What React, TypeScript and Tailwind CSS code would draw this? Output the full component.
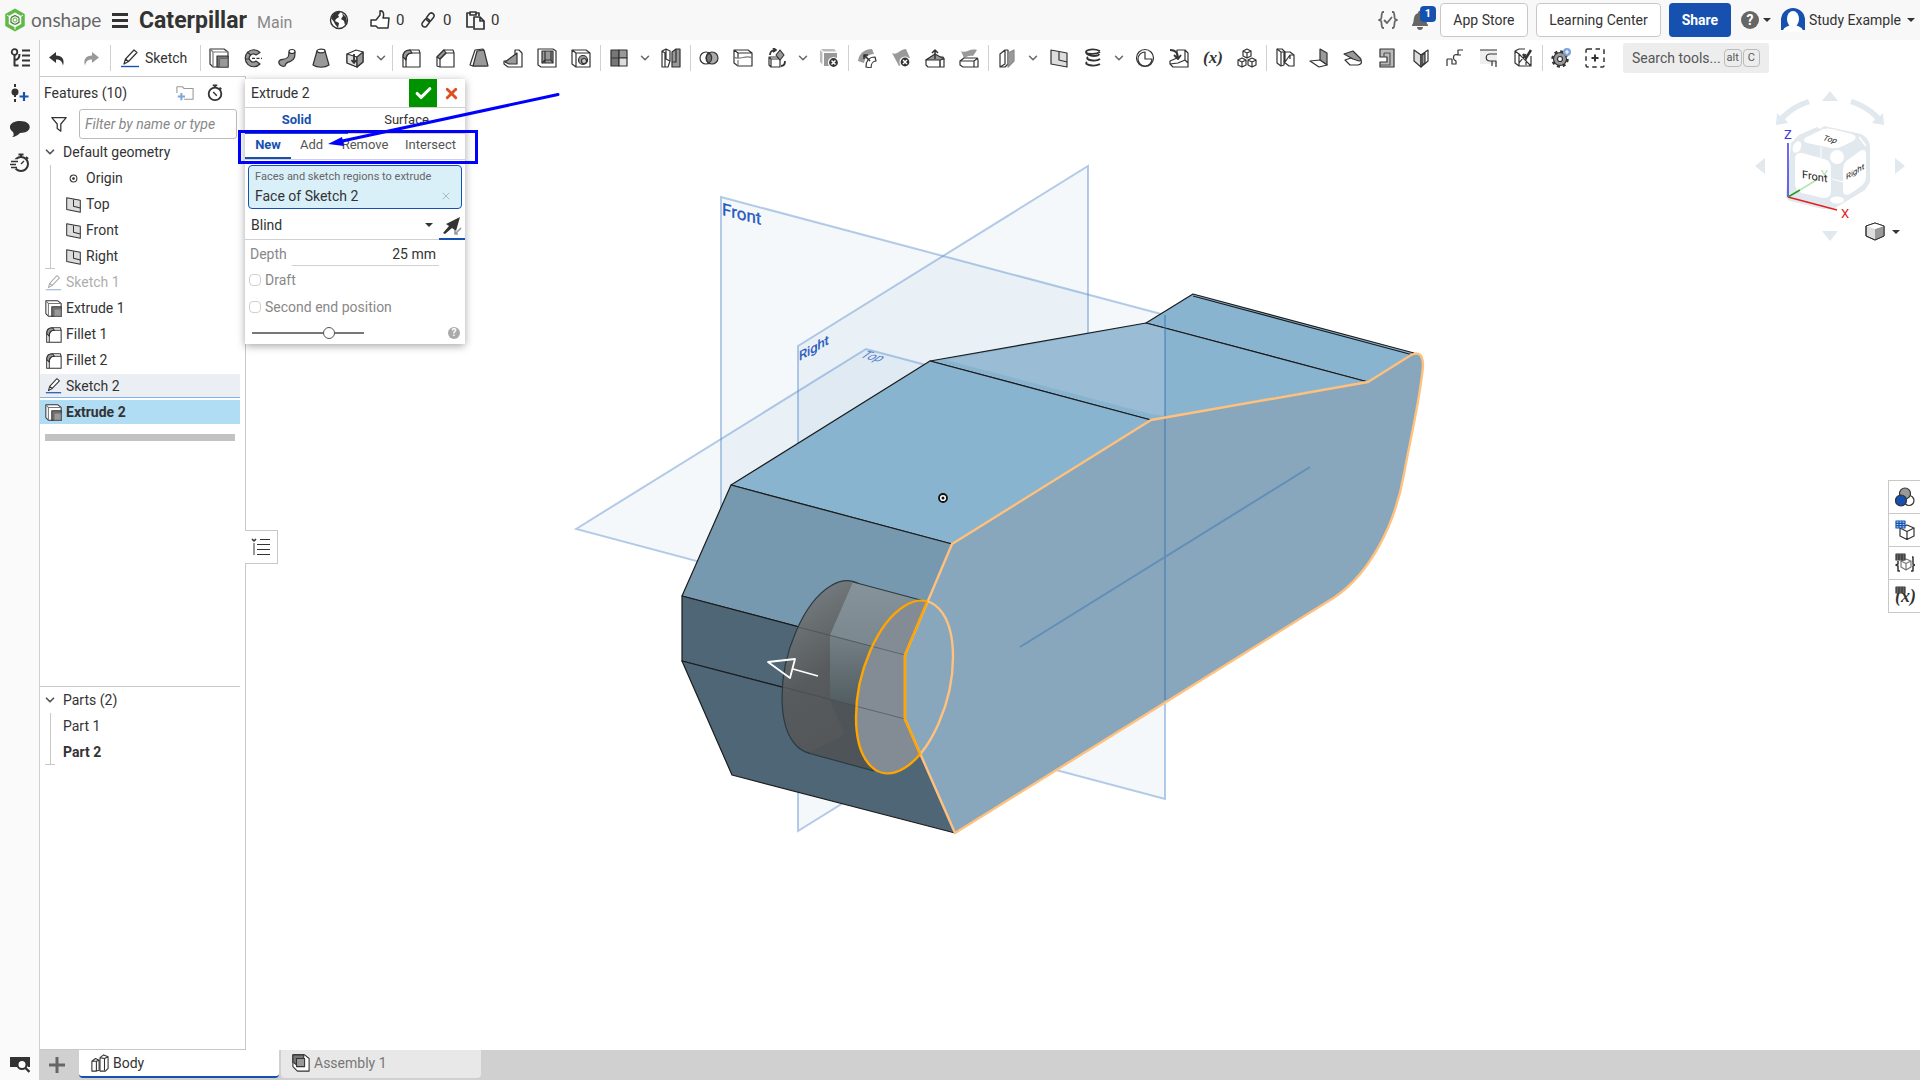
import { useState } from 'react';
import type { ReactNode } from 'react';
import { Check, ChevronDown, X } from 'lucide-react';

const DARK = '#333333';
const MID = '#999999';

interface IconProps {
  size?: string;
  children: ReactNode;
}

// All tool glyphs are drawn on a 20 unit grid
const Icon = ({ size = 'size-5', children }: IconProps) => (
  <svg
    viewBox="0 0 20 20"
    className={`${size} shrink-0`}
    fill="none"
    stroke={DARK}
    strokeWidth="1.2"
    strokeLinejoin="round"
    aria-hidden="true"
  >
    {children}
  </svg>
);

const glyphs: Record<string, ReactNode> = {
  undo: <path d="M9 4 2 9.500l7 5.500v-3.500c4 0 6 1.500 7 6 2-6-1-10-7-10z" fill={DARK} stroke="none" />,
  redo: <path d="m11 4 7 5.500-7 5.500v-3.500c-4 0-6 1.500-7 6-2-6 1-10 7-10z" fill={MID} stroke="none" />,
  sketch: (
    <>
      <path d="m4 16 1.500-5L14 2l3 2.500-8.500 9zM5.500 11l3 2.500" fill="#fff" />
      <path d="M1 18.500h18" stroke="#1651b0" strokeWidth="1.400" />
    </>
  ),
  extrude: (
    <>
      <path d="M1 1h14l4 3v15H4l-3-3z" fill="#fff" />
      <path d="M4 4h15M4 4v15M1 1l3 3" stroke="#777" />
      <path d="M8 8h11v11H8z" fill="#777" />
      <path d="M10.500 10.500H19V19h-8.500z" fill={MID} stroke="#666" />
    </>
  ),
  revolve: (
    <>
      <path d="M17 4.500A8.500 8.500 0 1 0 17 16l-4-3a4 4 0 1 1 0-6z" fill={MID} />
      <path d="M4 4l4 3M2 11l4 0" />
      <path d="M9 10.300h10" strokeDasharray="3 1.500" />
    </>
  ),
  sweep: (
    <>
      <path d="M2 13c2-3 6 0 9-4 1-2 1-4 1-5h6c0 4 0 7-4 9-3 2-5 0-6 5-3 1-7-1-6-5z" fill={MID} />
      <ellipse cx="15" cy="3.500" rx="3" ry="2" fill="#fff" />
    </>
  ),
  loft: (
    <>
      <path d="M6 3 2 17c4 3 12 3 16 0L14 3z" fill={MID} />
      <ellipse cx="10" cy="3" rx="4" ry="1.800" fill="#fff" />
    </>
  ),
  thicken: (
    <>
      <path d="m2 6 9-4 7 2v10l-6 5-10-4z" fill="#fff" />
      <path d="m2 6 10 3v10L2 15z" fill="#ddd" />
      <path d="m12 9 6-5v10l-6 5z" fill={MID} />
      <path d="M9 6v9M6.500 12 9 15l2.500-3" strokeWidth="1.800" />
    </>
  ),
  fillet: (
    <>
      <path d="M2 19V9q0-7 7-7h9l1 3v14H5z" fill="#fff" />
      <path d="M2 9q0-7 7-7l2 3q-6 0-6 7z" fill={MID} />
      <path d="M5 19v-7q0-7 6-7h8" />
    </>
  ),
  chamfer: (
    <>
      <path d="M2 18V9l7-7h9l1 3v14H5z" fill="#fff" />
      <path d="m2 9 7-7 2 3-6 6z" fill={MID} />
      <path d="M5 19v-8l6-6h8" />
    </>
  ),
  draft: (
    <>
      <path d="m1 17 5-15 8-1 4 17H4z" fill="#fff" />
      <path d="M4 18 8 3l7-1 4 16z" fill={MID} />
    </>
  ),
  rib: (
    <>
      <path d="M12 2h4l3 3v14H5l-4-3v-3h5l6-5z" fill="#fff" />
      <path d="M2 14 14 5v11H6z" fill={MID} />
    </>
  ),
  shell: (
    <>
      <path d="M1 1h15l3 2v16H4l-3-2z" fill="#fff" />
      <path d="M5 3h11v12H5z" fill={MID} />
      <path d="M8 3v12M5 15l3-3h6l2 3M14 3v9" />
    </>
  ),
  hole: (
    <>
      <path d="M1 2h14l4 3v14H5l-4-3zM5 5h14M5 5v14M1 2l4 3" />
      <circle cx="12" cy="12" r="4.500" fill={MID} />
      <circle cx="13" cy="13" r="2.500" fill="#ccc" />
    </>
  ),
  pattern: (
    <>
      <path d="M2 2h8v8H2zM2 10h8v8H2z" fill="#777" />
      <path d="M10 2h8v8h-8z" fill={MID} />
      <path d="M10 10h8v8h-8z" fill="#ddd" />
    </>
  ),
  mirror: (
    <>
      <path d="m1 3 4-2 4 2v10l-2 6H1zM1 3l3 2v14M5 1v10l4 2" fill="#fff" />
      <path d="M19 1h-4l-4 3v15h8z" fill={MID} />
      <path d="M15 1v13h-4" />
    </>
  ),
  boolean: (
    <>
      <circle cx="7" cy="10" r="6" fill="#fff" />
      <circle cx="13" cy="10" r="6" fill="#aaa" />
      <path d="M10 5a6 6 0 0 1 0 10 6 6 0 0 1 0-10z" fill="#777" />
    </>
  ),
  split: (
    <>
      <path d="M1 2h14l4 3v13H5l-4-3zM1 2l4 3h14M5 5v5" />
      <path d="M1 9c6 4 12-3 18 1M5 12v6" stroke="#777" />
    </>
  ),
  transform: (
    <>
      <path d="M2 9h8l3 2v8H4l-2-2zM2 9l2 2h9M4 11v8" />
      <path d="m13 2 4 5-4 5-4-5z" fill={MID} />
      <path d="M3 7c0-3 2-5 5-5M6 0l3 2-3 2M18 13c0 3-1 5-4 5" strokeWidth="1.800" />
    </>
  ),
  deletePart: (
    <>
      <path d="M1 1h14l3 3H4v13l-3-3z" fill="#bbb" stroke="none" />
      <path d="M1 1l3 3h14M4 4v14" stroke="#fff" />
      <path d="M5 5h13v13H5z" fill={MID} stroke="none" />
      <circle cx="14.500" cy="14.500" r="5" fill={DARK} stroke="#fff" />
      <path d="m12.500 12.500 4 4m0-4-4 4" stroke="#fff" strokeWidth="1.500" />
    </>
  ),
  modifyFillet: (
    <>
      <path d="M1 13C2 5 8 1 15 1l2 5c-6 0-9 4-10 9z" fill={MID} stroke="none" />
      <path d="M9 19c0-6 3-10 9-10l1 4c-3 0-5 3-5 7z" fill="#fff" />
      <path d="m13 13-6-6M7 11V7h4" strokeWidth="1.600" />
    </>
  ),
  deleteFace: (
    <>
      <path d="M1 5c5 3 8-4 14-4l4 9c-6 1-6 6-11 8z" fill={MID} stroke="none" />
      <circle cx="14" cy="14" r="5" fill={DARK} stroke="#fff" />
      <path d="m12 12 4 4m0-4-4 4" stroke="#fff" strokeWidth="1.500" />
    </>
  ),
  moveFace: (
    <>
      <path d="m1 12 5-3h12l1 2v8H3l-2-2z" fill="#fff" />
      <path d="M1 12 10 6l9 5-4 1z" fill={MID} />
      <path d="M15 12v7M10 11V2M7 5l3-3 3 3" strokeWidth="1.500" />
    </>
  ),
  replaceFace: (
    <>
      <path d="M2 3c5 3 8-3 16-1l-4 6c-5-1-7 2-9 2z" fill={MID} stroke="none" />
      <path d="m1 13 4-3h13l1 2v7H4l-3-2zM1 13h14v6M15 13l4-3" />
    </>
  ),
  offset: (
    <>
      <path d="m3 6 5-4h3v14l-3 3H3zM8 2v14l-5 3" />
      <path d="m11 5 6-3v11l-6 6z" fill={MID} stroke="#888" />
    </>
  ),
  plane: (
    <>
      <path d="m2 2 16 3v14L2 16z" fill="#ddd" />
      <path d="M10 4v8l8 2" />
    </>
  ),
  helix: (
    <path
      d="M17 3C10 0 3 2 3 4s10 3 14 0M3 4c0 3 3 3 7 4 4 0 6-1 6-2M5 9c-4 3 8 5 12 2M4 14c-4 3 8 5 13 2"
      strokeWidth="1.800"
    />
  ),
  mass: (
    <>
      <circle cx="10" cy="10" r="8.500" />
      <path d="M10 4v7h7a7 7 0 1 1-7-7z" />
    </>
  ),
  derived: (
    <>
      <path d="M8 2h8l3 3v14H4l-3-3v-3l7-3zM16 2v10l-7 3-8 1M16 12l3 3" />
      <path d="M1 2c5 0 8 2 8 8M5 7l4 4 3-4" strokeWidth="1.800" />
    </>
  ),
  variable: (
    <text
      x="10"
      y="15"
      textAnchor="middle"
      fill={DARK}
      stroke="none"
      fontFamily="Liberation Serif, serif"
      fontSize="17"
      fontWeight="700"
      fontStyle="italic"
    >
      (x)
    </text>
  ),
  composite: (
    <>
      <path d="m10 1 4 2v5l-4 2-4-2V3zM6 3l4 2 4-2M10 5v5" />
      <path d="m5 10 4 2v5l-4 2-4-2v-5zM1 12l4 2 4-2M5 14v5" />
      <path d="m15 10 4 2v5l-4 2-4-2v-5zM11 12l4 2 4-2M15 14v5" />
    </>
  ),
  sheetModel: (
    <>
      <path d="M2 1h5l3 3h5l4 3v11h-5l-5-4v3l-3 1-4-3z" fill="#fff" />
      <path d="M2 1l4 3v14M6 4h4v10M10 14l5-7h4M9 14V4M15 7v4" />
    </>
  ),
  flange: (
    <>
      <path d="m11 1 7 4v12l-7-5z" fill={MID} />
      <path d="m1 13 10-1 7 5-8 2z" fill="#fff" />
    </>
  ),
  hem: (
    <>
      <path d="m2 12 5 5h8c5-1 4-5 1-6l-8-1z" fill="#fff" />
      <path d="m1 6 9-3 7 7c2 2 1 3-1 3l-6-2z" fill={MID} />
    </>
  ),
  tab: (
    <>
      <path d="M3 1h14v18H3v-5h7V9H3z" fill="#bbb" />
      <path d="M7 5h6v12H3M7 5v4" stroke="#555" />
    </>
  ),
  bend: (
    <>
      <path d="m3 2 7 5v12l-7-6z" fill="#ddd" />
      <path d="m17 2-7 5v12l7-6zM13 5v11" fill="#fff" />
      <path d="m11 7 3-2v10l-3 2z" fill={MID} />
    </>
  ),
  joint: <path d="M18 2h-5v5c-5-2-6 4-2 6v3h-4v-5H2M2 11v7M13 7h3" />,
  corner: (
    <>
      <path d="M1 2h17v14H1z" fill="#eee" stroke="none" />
      <path d="M1 2h17M18 6h-7c-5 0-5 7 0 7h6v6M13 13v5" />
    </>
  ),
  finish: (
    <>
      <path d="M2 3l4-2h6M18 8v10H6l-4-3V3l4 3v12M6 6l12 12M6 15l7-9M13 9v8" />
      <path d="m10 6 3 4 5-8" strokeWidth="2.500" />
    </>
  ),
  gear: (
    <>
      <circle cx="9" cy="11" r="6.500" fill={MID} />
      <circle cx="9" cy="11" r="7.500" strokeWidth="2.500" strokeDasharray="3 2.890" />
      <circle cx="9" cy="11" r="2.500" fill="#fff" />
      <circle cx="16" cy="4" r="4" fill="#7fa6d8" stroke="none" />
      <path d="M16 2v4M14 4h4" stroke="#fff" />
    </>
  ),
  addTool: (
    <>
      <rect x="1" y="1" width="18" height="18" rx="1.500" strokeDasharray="4.500 3.500" strokeWidth="1.500" />
      <path d="M10 6.500v7M6.500 10h7" strokeWidth="2" />
    </>
  ),
  tree: (
    <>
      <circle cx="4.500" cy="4" r="2.800" strokeWidth="1.800" />
      <path d="M4.500 7v10.500h4M4.500 12c4 0 5-2 5-6M12 2.500h8M12 7.500h8M12 12.500h8M12 17.500h8" strokeWidth="2" />
    </>
  ),
  addVersion: (
    <>
      <path d="M5 1v18" strokeDasharray="3 2" strokeWidth="2" />
      <circle cx="5" cy="9" r="3.500" fill={DARK} stroke="none" />
      <path d="M14 9v9M9.500 13.500h9" stroke="#1651b0" strokeWidth="2.200" />
    </>
  ),
  comment: <path d="M10 3c13 0 13 12 0 12-2 2-5 4-8 4 2-1 2-3 1-5-6-4-3-11 7-11z" fill={DARK} stroke="none" />,
  stopwatch: (
    <>
      <circle cx="11" cy="11" r="7" strokeWidth="2" />
      <path d="M8.500 1.500h5M11 2v2M16 4l2 2" strokeWidth="2" />
      <path d="M0 8h7M0 11h6M0 14h6" stroke="#fafafa" strokeWidth="3.500" />
      <path d="M1 8.500h7M0 11.500h6M1 14.500h6M11 11l3-3" strokeWidth="1.300" />
    </>
  ),
  timer: (
    <>
      <circle cx="10" cy="11" r="7" strokeWidth="2" />
      <path d="M7.500 1.500h5M10 2v2M15 4l2 2" strokeWidth="2" />
      <path d="m8 9 4 4" strokeWidth="1.600" />
    </>
  ),
  searchTabs: (
    <>
      <path d="M0 3h20v10h-2a6 6 0 0 0-11 0H0z" fill={DARK} stroke="none" />
      <circle cx="12" cy="10.500" r="4.500" fill="#fff" strokeWidth="2" />
      <path d="m15.500 14 4 4" strokeWidth="2.400" />
    </>
  ),
  globe: (
    <>
      <circle cx="10" cy="10" r="8.500" fill="#fff" strokeWidth="1.400" />
      <path d="M5 3c3-2 6-1 6 0l-2 2 1 2-3 2-1 2 4 2-1 5c-2-3-3-3-4-6L2 8zM13 3l4 4 1 5-2 3-1-4-3-2 2-3z" fill={DARK} stroke="none" />
    </>
  ),
  thumb: (
    <path d="M1 10h5l4-5V1c4-1 4 4 3 7h6l-1 10H8l-2-2H1z" fill="#fff" strokeWidth="1.500" />
  ),
  link: (
    <g strokeWidth="1.700" transform="rotate(-52 10 10)">
      <rect x="1" y="7" width="10" height="6" rx="3" />
      <rect x="9" y="7" width="10" height="6" rx="3" />
    </g>
  ),
  clipboard: (
    <>
      <path d="M8 17H2V3h3M11 3h3v3M5 2h6v3H5z" strokeWidth="1.700" />
      <path d="M9 7h6l4 4v8H9zM15 7v4h4" strokeWidth="1.700" />
    </>
  ),
  braces: (
    <path
      d="M6 2H5C3 2 4 8 3 9l-2 1 2 1c1 1 0 7 2 7h1M14 2h1c2 0 1 6 2 7l2 1-2 1c-1 1 0 7-2 7h-1M6 10l3 3 5-6"
      stroke="#666"
      strokeWidth="1.800"
    />
  ),
  bell: <path d="M8 3c0-3 4-3 4 0 6 2 3 9 6 12v1H2v-1c3-3 0-10 6-12zM7 17h6c0 4-6 4-6 0z" fill="#666" stroke="none" />,
  folder: (
    <>
      <path d="M1 10V3h6l2 2h10v12H9" stroke={MID} />
      <path d="M6 10v8M2 14h8" stroke="#7fa6d8" strokeWidth="2.200" />
    </>
  ),
  filter: <path d="M2 3h16l-6 7v8l-4-3v-5z" strokeWidth="1.400" />,
  origin: (
    <>
      <circle cx="10" cy="10" r="4" />
      <circle cx="10" cy="10" r="1" fill={DARK} />
    </>
  ),
  partTab: (
    <>
      <path d="m1 8 4-3 4 2v11l-3 1H1zM1 8h5v11M6 8l3-1" fill="#fff" />
      <path d="m10 4 4-3 5 2v13l-3 3h-6zM10 4l5 1v13M15 5l4-2" fill="#fff" />
    </>
  ),
  assembly: (
    <>
      <path d="M1 1h13l5 4v14H6l-5-5z" fill="#fff" />
      <path d="M1 1h12v11H5L1 9z" fill="#777" />
      <path d="M5 5h9v9H5z" fill={MID} />
    </>
  ),
  appearance: (
    <>
      <circle cx="14" cy="13.500" r="5" fill="#fff" />
      <circle cx="10" cy="6.500" r="5.500" fill={MID} />
      <circle cx="6" cy="13.500" r="5.500" fill="#1651b0" />
    </>
  ),
  cubeTable: (
    <>
      <path d="m12 5 7 3v8l-7 3.500L5 16V8zM5 8l7 3.500L19 8M12 11.500v8" />
      <path d="M1 1h9v7H1zM1 3.300h9M1 5.600h9M4 1v7M7 1v7" fill="#b9d4f5" stroke="#1651b0" />
    </>
  ),
  configTable: (
    <>
      <path d="m11 6 5 2v6l-5 3-5-3V8zM6 8l5 2.500L16 8M11 10v7" stroke="#777" />
      <path d="M3 8v3l-2 1 2 1v5h2M17 4h1v7l2 1-2 1v5h-2" strokeWidth="1.500" />
      <path d="M1 1h9v6H1zM1 3h9M1 5h9M4 1v6M7 1v6" fill={MID} />
    </>
  ),
  variableTable: (
    <>
      <text
        x="10.500"
        y="16"
        textAnchor="middle"
        fill={DARK}
        stroke="none"
        fontFamily="Liberation Serif, serif"
        fontSize="18"
        fontWeight="700"
        fontStyle="italic"
      >
        (x)
      </text>
      <path d="M1 1h9v6H1zM1 3h9M1 5h9M4 1v6M7 1v6" fill={MID} />
    </>
  ),
  listToggle: (
    <>
      <path d="m1 2 2 2 2-2" strokeWidth="1.600" />
      <path d="M3 6v12" stroke={MID} strokeWidth="2" />
      <path d="M9 2.500h10M6 7.500h13M6 12.500h13M6 17.500h13" />
    </>
  ),
  flip: (
    <>
      <path d="m1 17 6-7-3-2L18 1l-4 14-4-3-7 6z" fill={DARK} stroke="none" />
      <path d="m13 18 6-6M13 14v4h3" stroke={MID} strokeWidth="1.600" />
    </>
  ),
};

// '|' is a group divider, 'v' opens the rest of a group
const tools = [
  'extrude', 'revolve', 'sweep', 'loft', 'thicken', 'v', '|',
  'fillet', 'chamfer', 'draft', 'rib', 'shell', 'hole', '|',
  'pattern', 'v', 'mirror', '|',
  'boolean', 'split', 'transform', 'v', 'deletePart', '|',
  'modifyFillet', 'deleteFace', 'moveFace', 'replaceFace', '|',
  'offset', 'v', 'plane', 'helix', 'v', 'mass', 'derived', 'variable', 'composite', '|',
  'sheetModel', 'flange', 'hem', 'tab', 'bend', 'joint', 'corner', 'finish', '|',
  'gear', 'addTool',
];

const Divider = () => (
  <span className="flex h-[26px] w-1 shrink-0 justify-center">
    <span className="w-px bg-[#d0d0d0]" />
  </span>
);

const Caret = () => (
  <svg viewBox="0 0 8 4" className="h-1 w-2 shrink-0" aria-hidden="true">
    <path d="M0 0h8L4 4z" fill={DARK} />
  </svg>
);

const ToolButton = ({ name }: { name: string }) => (
  <button aria-label={name} className="flex h-7 w-[34px] shrink-0 items-center justify-center">
    <Icon>{glyphs[name]}</Icon>
  </button>
);

const Header = () => (
  <header className="flex h-10 shrink-0 items-center bg-[#f8f8f8] text-[15px]">
    <a href="#home" className="flex w-[108px] items-center gap-[5px] pl-1">
      <svg viewBox="0 0 22 24" className="h-6 w-[22px]" fill="none" aria-hidden="true">
        <path d="M11 2.500 19 7v10l-8 4.500L3 17V7z" stroke="#5fb946" strokeWidth="3.500" />
        <path d="m11 7.500 4 2.200v4.600l-4 2.200-4-2.200V9.700z" stroke="#4a7a3c" strokeWidth="1.200" />
        <path d="m3 7 4 2.700M11 21.500v-5M19 7l-4 2.700" stroke="#f8f8f8" />
        <circle cx="11" cy="12" r="2" stroke="#5fb946" />
      </svg>
      <span className="font-[Lato,sans-serif] text-[19px] leading-6 text-[#666]">onshape</span>
    </a>
    <button aria-label="Menu" className="ml-1 flex w-4 flex-col gap-[3px]">
      <span className="h-[3px] bg-[#333]" />
      <span className="h-[3px] bg-[#333]" />
      <span className="h-[3px] bg-[#333]" />
    </button>
    <h1 className="ml-[11px] w-[112px] pt-[2px] text-[23px] leading-6 font-bold">Caterpillar</h1>
    <span className="ml-[6px] w-[72px] pt-[6px] text-base text-[#888]">Main</span>
    <Icon>{glyphs.globe}</Icon>
    <button className="ml-[21px] flex w-[49px] items-center gap-[6px]">
      <Icon>{glyphs.thumb}</Icon>0
    </button>
    <button className="flex w-[46px] items-center gap-[6px]">
      <Icon size="size-[18px]">{glyphs.link}</Icon>0
    </button>
    <button className="flex items-center gap-[6px]">
      <Icon>{glyphs.clipboard}</Icon>0
    </button>
    <div className="ml-auto flex items-center pr-[5px]">
      <button aria-label="Release management">
        <Icon>{glyphs.braces}</Icon>
      </button>
      <button aria-label="Notifications" className="relative ml-3 mr-[10px]">
        <Icon>{glyphs.bell}</Icon>
        <span className="absolute -top-1 left-[10px] flex size-4 items-center justify-center rounded-sm bg-[#1651b0] text-[11px] font-bold text-white">
          1
        </span>
      </button>
      <button className="h-[34px] w-[88px] rounded-[4px] border border-[#c8c8c8] bg-white text-sm">App Store</button>
      <button className="ml-2 h-[34px] w-[125px] rounded-[4px] border border-[#c8c8c8] bg-white text-sm">
        Learning Center
      </button>
      <button className="ml-2 h-[34px] w-[62px] rounded-[4px] bg-[#1651b0] text-sm font-bold text-white">Share</button>
      <button aria-label="Help" className="ml-[10px] flex items-center gap-1">
        <span className="flex size-[18px] items-center justify-center rounded-full bg-[#666] text-sm font-bold text-white">
          ?
        </span>
        <Caret />
      </button>
      <button className="ml-[10px] flex items-center gap-1 text-sm">
        <svg viewBox="0 0 24 24" className="size-6" aria-hidden="true">
          <path d="M0 22V12a12 12 0 0 1 24 0v10z" fill="#1651b0" />
          <ellipse cx="12" cy="11" rx="6" ry="8" fill="#fff" />
          <path d="M2 24c0-5 4-5 7-7h6c3 2 7 2 7 7z" fill="#fff" />
        </svg>
        Study Example
        <span className="ml-[2px]">
          <Caret />
        </span>
      </button>
    </div>
  </header>
);

const Toolbar = () => (
  <div className="flex h-9 shrink-0 items-center bg-white">
    <ToolButton name="undo" />
    <ToolButton name="redo" />
    <Divider />
    <button className="flex h-7 w-[86px] shrink-0 items-center gap-[5px] pl-2 text-sm">
      <Icon>{glyphs.sketch}</Icon>
      Sketch
    </button>
    <Divider />
    {tools.map((tool, i) => {
      if (tool === '|') return <Divider key={i} />;
      if (tool === 'v') {
        return (
          <button key={i} aria-label="More tools" className="flex w-[18px] shrink-0 justify-center">
            <ChevronDown size={14} color="#666" strokeWidth={2.5} />
          </button>
        );
      }
      return <ToolButton key={i} name={tool} />;
    })}
    <button className="ml-[11px] flex h-[30px] w-[146px] shrink-0 items-center rounded-[3px] bg-[#ededed] pl-[9px] text-sm text-[#555]">
      Search tools...
      <kbd className="ml-[3px] rounded-sm border border-[#bbb] px-[2px] font-[Roboto,sans-serif] text-[11px] leading-4">alt</kbd>
      <kbd className="ml-px rounded-sm border border-[#bbb] px-1 font-[Roboto,sans-serif] text-[11px] leading-4">C</kbd>
    </button>
  </div>
);

const Rail = () => (
  <nav className="flex w-10 shrink-0 flex-col items-center border-r border-[#d0d0d0] bg-[#fafafa]">
    {['tree', 'addVersion', 'comment', 'stopwatch'].map((name) => (
      <button key={name} aria-label={name} className="flex h-[35px] w-full items-center justify-center">
        <Icon>{glyphs[name]}</Icon>
      </button>
    ))}
    <button aria-label="Search tabs" className="mt-auto flex h-8 items-center">
      <Icon>{glyphs.searchTabs}</Icon>
    </button>
  </nav>
);

const features = [
  { icon: 'sketch', name: 'Sketch 1', style: 'opacity-40' },
  { icon: 'extrude', name: 'Extrude 1', style: '' },
  { icon: 'fillet', name: 'Fillet 1', style: '' },
  { icon: 'fillet', name: 'Fillet 2', style: '' },
  { icon: 'sketch', name: 'Sketch 2', style: 'border-b border-[#7fb2e5] bg-[#ebeff4]' },
  { icon: 'extrude', name: 'Extrude 2', style: 'bg-[#b0dcf4] font-bold' },
];

const FeaturePanel = () => (
  <aside className="flex w-[206px] shrink-0 flex-col border-t border-r border-b border-[#c8c8c8] bg-white pr-[5px]">
    <div className="flex h-8 items-center pl-1">
      <h2 className="text-sm">Features (10)</h2>
      <button aria-label="Add folder" className="ml-auto">
        <Icon size="size-[18px]">{glyphs.folder}</Icon>
      </button>
      <button aria-label="Regeneration times" className="mr-4 ml-3">
        <Icon size="size-[18px]">{glyphs.timer}</Icon>
      </button>
    </div>
    <div className="flex items-center pl-[10px]">
      <Icon size="size-[18px]">{glyphs.filter}</Icon>
      <input
        aria-label="Filter"
        placeholder="Filter by name or type"
        className="ml-[11px] h-[30px] w-[158px] rounded-[3px] border border-[#bbb] px-[5px] text-sm italic placeholder:text-[#888]"
      />
    </div>
    <button className="flex h-[26px] items-center gap-[6px] pl-[3px] text-left text-sm">
      <ChevronDown size={14} color="#555" strokeWidth={3} />
      Default geometry
    </button>
    <div className="flex">
      <span className="ml-[5px] h-[104px] w-[10px] border-b border-[#c8c8c8] pl-[5px]">
        <span className="block h-full w-px bg-[#c8c8c8]" />
      </span>
      <ul className="pl-[10px] text-sm">
        {['Origin', 'Top', 'Front', 'Right'].map((name) => (
          <li key={name} className="flex h-[26px] items-center gap-1">
            <Icon size="size-[17px]">{name === 'Origin' ? glyphs.origin : glyphs.plane}</Icon>
            {name}
          </li>
        ))}
      </ul>
    </div>
    <ul className="text-sm">
      {features.map((feature) => (
        <li key={feature.name} className="h-[26px] py-px">
          <span className={`flex h-6 items-center gap-1 pl-[5px] ${feature.style}`}>
            <Icon size="size-[17px]">{glyphs[feature.icon]}</Icon>
            {feature.name}
          </span>
        </li>
      ))}
    </ul>
    <div className="mx-[5px] mt-[9px] h-[7px] bg-[#c2c2c2]" />
    <section className="mt-auto h-[363px] border-t border-[#c8c8c8] text-sm">
      <button className="flex h-[26px] items-center gap-[6px] pl-[3px]">
        <ChevronDown size={14} color="#555" strokeWidth={3} />
        Parts (2)
      </button>
      <div className="flex">
        <span className="ml-[5px] h-[52px] w-[10px] border-b border-[#c8c8c8] pl-[5px]">
          <span className="block h-full w-px bg-[#c8c8c8]" />
        </span>
        <ul className="pl-2">
          <li className="h-[26px] leading-[26px]">Part 1</li>
          <li className="h-[26px] leading-[26px] font-bold">Part 2</li>
        </ul>
      </div>
    </section>
  </aside>
);

// The right hand side face, shared by the fill and by its highlight
const SIDE_FACE =
  'M952 544 1151 420 1368 382 1411 355Q1423 349 1423 366C1420 400 1410 440 1404 474C1395 525 1370 573 1335 597L955 833 905 719V655Z';

const Model = () => (
  <svg viewBox="246 76 1674 974" className="size-full" fill="none" aria-label="Part view">
    <defs>
      <linearGradient id="cap" x1="0" y1="0" x2="0" y2="1">
        <stop offset="0" stopColor="#72787b" />
        <stop offset="0.5" stopColor="#575b5d" />
        <stop offset="1" stopColor="#53575a" />
      </linearGradient>
      <linearGradient id="upper" x1="0" y1="582" x2="0" y2="655" gradientUnits="userSpaceOnUse">
        <stop offset="0" stopColor="#87939b" />
        <stop offset="1" stopColor="#78868d" />
      </linearGradient>
      <linearGradient id="middle" x1="0" y1="635" x2="0" y2="715" gradientUnits="userSpaceOnUse">
        <stop offset="0" stopColor="#748085" />
        <stop offset="1" stopColor="#4c585c" />
      </linearGradient>
      <clipPath id="frontSide">
        <path d="M600 450H991L905 655V719L955 833H600z" />
      </clipPath>
      <clipPath id="sideSide">
        <path d="M1100 450H991L905 655V719L955 833H1100z" />
      </clipPath>
    </defs>

    {/* Reference planes */}
    <g fill="#3c78b4" fillOpacity="0.055" stroke="#5b8fcb" strokeOpacity="0.45" strokeWidth="2">
      <path d="M721 197 1165 315V799L721 681z" />
      <path d="M798 346 1088 166V651L798 831z" />
      <path d="M576 529 866 349 1310 467 1020 647z" />
    </g>
    <g fill="#2457bd" stroke="#2457bd" strokeWidth="0.300" fontFamily="Roboto, sans-serif" fontSize="17">
      <text transform="translate(722 215) skewY(14)">Front</text>
      <text transform="translate(799 361) skewY(-30)" fontSize="13">Right</text>
      <text transform="translate(859 357) skewY(14) skewX(-45)" fontSize="12" stroke="none" fillOpacity="0.75">Top</text>
    </g>

    {/* Body */}
    <g stroke="#1c1c1c" strokeWidth="1.2" strokeLinejoin="round">
      <path d="M1146 323 1193 294 1414 353 1368 382z" fill="#89b4d0" />
      <path d="M930 361 1146 323 1368 382 1151 420z" fill="#89b4d0" />
      <path d="M946 360 1146 324 1165 329V416L1150 414z" fill="#9abcd4" stroke="none" />
      <path d="M731 485 930 361 1151 420 952 544z" fill="#89b4d0" />
      <path d="M731 485 952 544 905 655 682 596z" fill="#7699af" />
      <path d="M682 596 905 655V719L682 661z" fill="#4e6676" />
      <path d="M682 661 905 719 955 833 732 775z" fill="#4e6676" />
      <path d="M1193 296 1413 355" />
    </g>
    <path d={SIDE_FACE} fill="#88a7bd" />
    <path d="M1165 315V700M1020 647 1310 467" stroke="#3c78b4" strokeOpacity="0.5" strokeWidth="2" />

    {/* Extrude preview */}
    <g clipPath="url(#frontSide)">
      <circle
        r="1"
        transform="matrix(48.5 -30 0 81 830.5 667)"
        fill="url(#cap)"
        stroke="#2a3a40"
        strokeWidth="1.200"
        vectorEffect="non-scaling-stroke"
      />
      <path d="M853 582 928 602 905 655 830 635z" fill="url(#upper)" />
      <path d="M830 635 905 655V719L830 700z" fill="url(#middle)" />
      <path d="M830 700 905 719V760L874 771 808 753 845 735z" fill="#4f5458" />
      <path d="M853 582 928 602M808 753 874 771" stroke="#2a3a40" strokeWidth="1.200" />
      <circle r="1" transform="matrix(48.5 -30 0 81 904.5 687)" fill="#838c94" />
      <path d="M798 627 905 655M783 687 905 719" stroke="#3c4448" strokeOpacity="0.5" strokeWidth="1.200" />
    </g>

    <path d={SIDE_FACE} stroke="#ffc17d" strokeWidth="2.400" strokeLinejoin="round" />
    <g clipPath="url(#sideSide)">
      <circle
        r="1"
        transform="matrix(48.5 -30 0 81 904.5 687)"
        stroke="#ffc17d"
        strokeWidth="2.400"
        vectorEffect="non-scaling-stroke"
      />
    </g>
    <g clipPath="url(#frontSide)">
      <circle
        r="1"
        transform="matrix(48.5 -30 0 81 904.5 687)"
        stroke="#ffa500"
        strokeWidth="2.400"
        vectorEffect="non-scaling-stroke"
      />
    </g>
    <path d="M927 602 905 655V719L920 754" stroke="#ffa500" strokeWidth="2.400" />

    {/* Direction handle */}
    <path d="m768 662 27-3-5 19zM793 669 818 676" stroke="#fff" strokeWidth="1.800" strokeLinejoin="round" />

    {/* Origin */}
    <circle cx="943" cy="498" r="4" fill="#fff" stroke="#111" strokeWidth="1.800" />
    <circle cx="943" cy="498" r="1.500" fill="#111" />
  </svg>
);

const ViewCube = () => (
  <svg viewBox="1740 80 180 170" className="absolute top-1 right-0 h-[170px] w-[180px]" fill="none" aria-label="View cube">
    <g fill="#e1e8ee">
      <path d="m1830 91 8 10h-16zM1830 241l8-10h-16zM1755 166l10-8v16zM1905 166l-10-8v16z" />
      <path d="m1776 125 1-12 3 3q12-12 28-17l2 5q-14 4-25 15l3 4zM1884 125l-1-12-3 3q-12-12-28-17l-2 5q14 4 25 15l-3 4z" />
      <path d="m1791 143 8-8 18-8 3 2 4-3 37 8q8 4 9 12v36l-5 8-30 18q-6 2-12 1l-33-8q-5-2-4-8z" />
    </g>
    <g fill="#fff">
      <path d="m1805 138 18-9q4-1 9 0l20 5q7 3 1 7l-10 5q-6 3-12 2l-24-5q-5-2-2-5z" />
      <path d="M1795 159q0-7 7-6l22 6q7 2 7 9v22q0 9-8 8l-21-5q-7-2-7-9z" />
      <path d="M1843 170q0-8 6-11l11-8q6-3 6 4v21q0 7-6 11l-10 7q-7 3-7-4z" />
      <circle cx="1837" cy="157" r="7" />
      <ellipse cx="1797" cy="147" rx="4" ry="6" transform="rotate(25 1797 147)" />
      <ellipse cx="1837" cy="200" rx="7" ry="3.500" />
      <path d="m1859 137 7 9" stroke="#fff" strokeWidth="1.500" />
      <path d="M1821 147v11M1832 179l11 3" stroke="#fff" />
    </g>
    <path d="M1788 143V197" stroke="#3a3ae0" strokeWidth="1.500" />
    <path d="m1788 197 49 13" stroke="#e02020" strokeWidth="1.500" />
    <path d="m1788 197 12-7" stroke="#20a020" strokeWidth="1.500" />
    <path d="m1800 190 18-11" stroke="#b6e3b6" strokeWidth="1.500" />
    <g fontFamily="Roboto, sans-serif" fontSize="13" fill="#222">
      <text x="1784" y="139" fill="#3a3ae0">Z</text>
      <text x="1841" y="218" fill="#e02020">X</text>
      <text x="1821" y="178" fill="#a8dcae" fontSize="11">Y</text>
      <text transform="translate(1802 178) skewY(10)" fontSize="11">Front</text>
      <text transform="translate(1846 180) skewY(-32)" fontSize="8">Right</text>
      <text transform="translate(1822 140) skewY(14) skewX(-30)" fontSize="8">Top</text>
    </g>
    <g stroke="#333" strokeLinejoin="round">
      <path d="m1866 226 9-3 9 3v10l-9 4-9-4z" fill="#ddd" />
      <path d="m1875 229 9-3v10l-9 4z" fill="#999" stroke="none" />
      <path d="m1866 226 9-3 9 3-9 3z" fill="#fff" stroke="none" />
      <path d="m1866 226 9-3 9 3v10l-9 4-9-4z" />
    </g>
    <path d="M1892 230h8l-4 4z" fill="#333" />
  </svg>
);

const operations = [
  { name: 'New', width: 'w-[46px]' },
  { name: 'Add', width: 'w-[41px]' },
  { name: 'Remove', width: 'w-[66px]' },
  { name: 'Intersect', width: 'w-[65px]' },
];

const ExtrudeDialog = () => {
  const [operation, setOperation] = useState('New');
  const [depth, setDepth] = useState('25 mm');

  return (
    <form className="absolute top-[3px] -left-px z-10 w-[220px] bg-white text-sm shadow-[0_2px_8px_rgba(0,0,0,0.35)]">
      <div className="flex h-[29px] items-center border-b border-[#d0d0d0] pl-[6px]">
        <h3>Extrude 2</h3>
        <button type="button" aria-label="Accept" className="ml-auto flex h-7 w-7 items-center justify-center bg-[#009300]">
          <Check size={19} color="#fff" strokeWidth={4} />
        </button>
        <button type="button" aria-label="Cancel" className="flex h-7 w-7 items-center justify-center">
          <X size={17} color="#e04e20" strokeWidth={4} />
        </button>
      </div>
      <div className="flex h-[26px] items-stretch text-[13px]">
        <button type="button" className="w-[103px] border-b-2 border-[#1651b0] font-bold text-[#1651b0]">Solid</button>
        <button type="button" className="flex-1 border-b border-[#d0d0d0]">Surface</button>
      </div>
      <div className="flex h-[26px] border-b border-[#d0d0d0] text-[13px]">
        {operations.map(({ name, width }) => (
          <button
            key={name}
            type="button"
            onClick={() => setOperation(name)}
            className={`${width} border-b-2 ${
              name === operation ? 'border-[#1651b0] font-bold text-[#1651b0]' : 'border-transparent text-[#555]'
            }`}
          >
            {name}
          </button>
        ))}
      </div>
      <div className="mx-[3px] mt-[5px] flex h-11 flex-col justify-center rounded-sm border border-[#1651b0] bg-[#d9f0f9] pr-[9px] pl-[6px]">
        <span className="text-[11px] leading-[18px] text-[#666]">Faces and sketch regions to extrude</span>
        <span className="flex items-center justify-between leading-[20px]">
          Face of Sketch 2
          <X size={12} color="#99aab4" strokeWidth={1.5} />
        </span>
      </div>
      <div className="flex h-[31px]">
        <label className="relative flex flex-1 items-center border-b border-[#d0d0d0] pt-[2px]">
          <select aria-label="End type" className="w-full appearance-none bg-transparent pl-[6px]">
            <option>Blind</option>
          </select>
          <span className="pointer-events-none absolute right-[6px] flex">
            <Caret />
          </span>
        </label>
        <button type="button" aria-label="Opposite direction" className="flex w-[26px] items-center justify-center border-b-2 border-[#1651b0] pt-1">
          <Icon>{glyphs.flip}</Icon>
        </button>
      </div>
      <label className="mr-[26px] ml-[5px] flex h-[26px] items-center gap-[5px] pt-[2px] text-[#888]">
        Depth
        <input
          value={depth}
          onChange={(e) => setDepth(e.target.value)}
          className="h-6 min-w-0 flex-1 border-b border-[#d0d0d0] pr-[3px] text-right text-[#333]"
        />
      </label>
      {['Draft', 'Second end position'].map((name) => (
        <label key={name} className="flex h-[27px] items-center gap-1 pl-1 text-[#888]">
          <input type="checkbox" className="size-3 appearance-none rounded-sm border border-[#d0d0d0]" />
          {name}
        </label>
      ))}
      <div className="flex h-6 items-center justify-between pt-[2px] pr-[5px] pl-[7px]">
        <input
          type="range"
          aria-label="Preview opacity"
          defaultValue={71}
          className="h-[2px] w-[112px] appearance-none bg-[#777] [&::-webkit-slider-thumb]:size-3 [&::-webkit-slider-thumb]:appearance-none [&::-webkit-slider-thumb]:rounded-full [&::-webkit-slider-thumb]:border [&::-webkit-slider-thumb]:border-[#555] [&::-webkit-slider-thumb]:bg-white"
        />
        <button type="button" aria-label="Help" className="flex size-3 items-center justify-center rounded-full bg-[#aaa] text-[10px] font-bold text-white">
          ?
        </button>
      </div>
    </form>
  );
};

// Callout over the operation tabs
const Callout = () => (
  <svg
    viewBox="236 84 330 90"
    className="pointer-events-none absolute top-2 -left-[10px] z-20 h-[90px] w-[330px]"
    fill="none"
    aria-hidden="true"
  >
    <rect x="239.500" y="131.500" width="237" height="31" stroke="#0000ff" strokeWidth="3" />
    <path d="M558 94.500 340 141.500" stroke="#0000ff" strokeWidth="3" strokeLinecap="round" />
    <path d="m328 144 14-7 2 9z" fill="#0000ff" />
  </svg>
);

const Canvas = () => (
  <main className="relative min-w-0 flex-1 bg-white">
    <Model />
    <ExtrudeDialog />
    <Callout />
    <ViewCube />
    <button
      aria-label="Toggle feature list"
      className="absolute top-[454px] -left-px flex h-[34px] w-[33px] items-center justify-center border border-l-0 border-[#c8c8c8] bg-white"
    >
      <Icon>{glyphs.listToggle}</Icon>
    </button>
    <div className="absolute top-[404px] right-0 flex h-[133px] w-8 flex-col divide-y divide-[#c8c8c8] border border-r-0 border-[#c8c8c8] bg-white">
      {['appearance', 'cubeTable', 'configTable', 'variableTable'].map((name) => (
        <button key={name} aria-label={name} className="flex w-full flex-1 items-center justify-center">
          <Icon>{glyphs[name]}</Icon>
        </button>
      ))}
    </div>
  </main>
);

const TabBar = () => (
  <footer className="flex h-[30px] shrink-0 items-start bg-[#d0d0d0] text-sm">
    <button aria-label="New tab" className="flex h-[30px] w-[39px] items-center pl-[9px]">
      <svg viewBox="0 0 16 16" className="size-4" aria-hidden="true">
        <path d="M8 0v16M0 8h16" stroke="#666" strokeWidth="3" />
      </svg>
    </button>
    <button className="flex h-7 w-[200px] items-center gap-1 rounded-b-[4px] border-b-2 border-[#1651b0] bg-white pl-3">
      <Icon size="size-[18px]">{glyphs.partTab}</Icon>
      Body
    </button>
    <button className="ml-[2px] flex h-7 w-[200px] items-center gap-1 rounded-b-[4px] bg-[#e8e8e8] pb-[2px] pl-[11px] text-[#777]">
      <Icon size="size-[18px]">{glyphs.assembly}</Icon>
      Assembly 1
    </button>
  </footer>
);

export default function App() {
  return (
    <div className="flex h-screen flex-col overflow-hidden bg-white font-[Roboto,sans-serif] text-[#333]">
      <Header />
      <div className="flex min-h-0 flex-1">
        <Rail />
        <div className="flex min-w-0 flex-1 flex-col">
          <Toolbar />
          <div className="flex min-h-0 flex-1">
            <FeaturePanel />
            <Canvas />
          </div>
          <TabBar />
        </div>
      </div>
    </div>
  );
}
